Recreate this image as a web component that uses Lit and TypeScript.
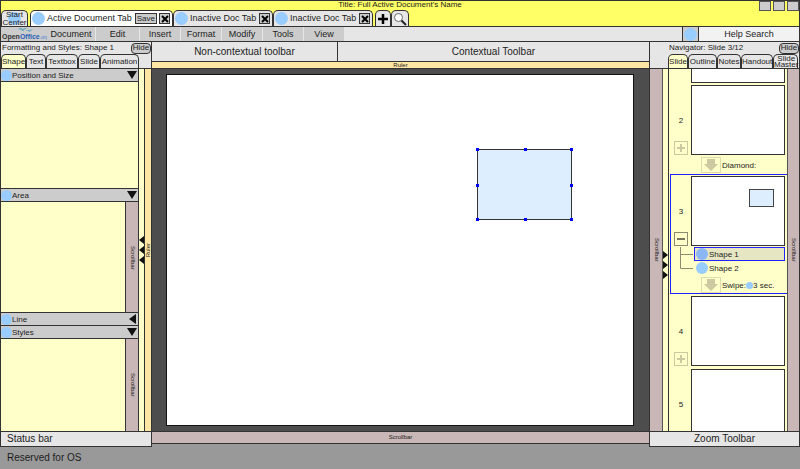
import { LitElement, html, svg, css, nothing } from "lit";
import { customElement } from "lit/decorators.js";
import { classMap } from "lit/directives/class-map.js";

const birds = svg`<path d="M0 3 Q4 0 7 3 Q9 1 13 1 Q9 3 7 6 Q5 3 0 3Z M11 5 Q14 3 16 5 Q18 3 21 3 Q18 5 16 7 Q14 5 11 5Z" fill="#6ab"/>`;
const cross = html`<svg width="8" height="8" viewBox="0 0 8 8" aria-hidden="true"><path d="M1 1L7 7M7 1L1 7" stroke="#000" stroke-width="2"/></svg>`;
const downArrow = html`<svg class="glyph" width="12" height="12" viewBox="0 0 12 12" aria-hidden="true"><path d="M1 2H11L6 10Z" fill="#111"/></svg>`;
const leftArrow = html`<svg class="glyph" width="12" height="12" viewBox="0 0 12 12" aria-hidden="true"><path d="M10 1V11L3 6Z" fill="#111"/></svg>`;

interface Section { name: string; open: boolean; scroll: boolean; size: number; }
interface Slide { no: string; toggle?: "plus" | "minus"; shapes?: string[]; effect?: string; duration?: string; current?: boolean; }

@customElement("app-root")
export class AppRoot extends LitElement {
  static styles = css`
    :host {
      display: flex; flex-direction: column; height: 100vh; min-width: 700px; overflow: hidden;
      box-sizing: border-box; background: #999; color: #1c1c1c;
      font: 9px/11px "Liberation Sans", Arial, sans-serif; --line: #333;
    }
    *, *::before { box-sizing: border-box; }
    button, input { font: inherit; color: inherit; margin: 0; padding: 0; border: 0; background: none; border-radius: 0; }
    ul, ol, h1, h2 { margin: 0; padding: 0; list-style: none; font: inherit; }
    svg { display: block; flex: none; }
    .dot { flex: none; width: 11px; height: 11px; border-radius: 50%; background: #9cf; }

    .top { position: relative; flex: none; height: 27px; background: #ff6; border: 1px solid var(--line); padding-top: 9px; }
    .title { position: absolute; top: 0; left: 0; right: 0; text-align: center; font-size: 8px; line-height: 8px; }
    .window { position: absolute; top: 0; right: 0; display: flex; gap: 2px; }
    .window button { width: 12px; height: 10px; background: #ccc; border: 1px solid #555; }
    .docs { display: flex; height: 16px; }
    .doc { position: relative; display: flex; align-items: center; gap: 2px; width: 100px; padding: 0 2px 0 1px; background: #e6e6e6; border: 1px solid var(--line); border-bottom: 0; border-radius: 5px 5px 0 0; white-space: nowrap; }
    .doc .dot { width: 13px; height: 13px; }
    .doc button.name { flex: 1; text-align: left; }
    .doc.on { width: 143px; margin-left: 2px; background: #fff; }
    .doc.start { width: 27px; padding: 0; justify-content: center; }
    .doc.start .dot { position: absolute; left: 6px; top: 1px; }
    .doc.start button { position: relative; font-size: 8px; line-height: 8px; }
    .doc.tool { width: 16px; padding: 0; justify-content: center; margin-left: 2px; }
    .doc.tool + .tool { width: 18px; margin-left: 0; }
    .save { height: 11px; padding: 0 1px; background: #ccc; border: 1px solid #333; font-size: 8px; line-height: 9px; }
    .close { width: 11px; height: 11px; display: grid; place-items: center; background: #ccc; border: 1px solid #333; }

    .menu { flex: none; display: flex; height: 15px; background: #e6e6e6; border: solid var(--line); border-width: 0 1px 1px; }
    .logo { flex: none; width: 46px; padding-left: 1px; display: flex; flex-direction: column; justify-content: space-between; background: #ccc; color: #333; font-size: 7px; font-weight: bold; line-height: 9px; white-space: nowrap; }
    .logo svg { margin-left: 13px; }
    .logo b { color: #2a5fb8; }
    .logo i { color: #4a80d0; font-size: 5px; font-style: normal; font-weight: normal; }
    .menus { display: flex; gap: 1px; flex: 1; }
    .menus button { width: 40px; background: #ccc; }
    .menus button.wide { width: 48px; }
    .menus button.mid { width: 43px; }
    .helpicon { width: 17px; display: grid; place-items: center; background: #ccc; border: solid var(--line); border-width: 0 1px; }
    .helpicon .dot { width: 13px; height: 13px; }
    .help { width: 100px; background: #f2f2f2; text-align: center; outline: none; }
    .help::placeholder { color: #1c1c1c; opacity: 1; }

    .main { flex: 1; min-height: 0; display: grid; grid-template-columns: 151px minmax(0, 1fr) 151px; }
    .side, .center { display: flex; flex-direction: column; min-height: 0; }
    .side { border: solid var(--line); border-width: 0 0 0 1px; }
    .side.right { border-right-width: 1px; }
    .head { flex: none; height: 27px; display: flex; flex-direction: column; justify-content: space-between; background: #e6e6e6; border-bottom: 1px solid var(--line); }
    .headline { display: flex; justify-content: space-between; align-items: center; height: 12px; padding-left: 1px; font-size: 8px; line-height: 10px; white-space: nowrap; }
    .right .headline { padding-left: 19px; }
    .hide { width: 20px; height: 11px; border: 1px solid var(--line); border-radius: 4px; background: #ccc; line-height: 8px; }
    .tabs { display: flex; height: 14px; font-size: 8px; }
    .tabs button { flex: none; background: #e6e6e6; border: 1px solid var(--line); border-bottom: 0; border-radius: 5px 5px 0 0; line-height: 8px; white-space: nowrap; display: grid; place-items: center; overflow: visible; }
    .tabs button.two { line-height: 6px; white-space: pre; }
    .tabs button.on { background: #ffffca; }
    .right .tabs { margin-left: 18px; }
    .w20 { width: 20px; } .w22 { width: 22px; } .w24 { width: 24px; } .w25 { width: 25px; } .w29 { width: 29px; } .w32 { width: 32px; } .w39 { width: 39px; }

    .body { flex: 1; min-height: 0; display: flex; }
    .sections { flex: 1; min-width: 0; display: flex; flex-direction: column; background: #ffffca; }
    .bar { flex: none; height: 13px; width: 100%; display: flex; align-items: center; background: #ccc; border-bottom: 1px solid var(--line); font-size: 8px; text-align: left; }
    .bar .name { flex: 1; }
    .panel { flex: var(--size) 1 0; min-height: 0; display: flex; justify-content: flex-end; border-bottom: 1px solid var(--line); }
    .panel:last-child { border-bottom: 0; }
    .scroll { flex: none; display: grid; place-items: center; background: #c9b6b6; font-size: 6px; line-height: 7px; overflow: hidden; }
    .vertical { writing-mode: vertical-rl; width: 13px; }
    .panel .vertical { border-left: 1px solid var(--line); }
    .splitter { width: 7px; flex: none; display: flex; flex-direction: column; justify-content: center; gap: 2px; background: #ffffca; border: solid var(--line); border-width: 0 1px; }
    .ruler { flex: none; display: grid; place-items: center; background: #ffe6a3; font-size: 6px; line-height: 6px; }
    .vruler { width: 6px; writing-mode: vertical-rl; }
    .vruler span { transform: rotate(180deg); }
    .foot { flex: none; height: 16px; padding: 0 6px; background: #e6e6e6; border: solid var(--line); border-width: 1px 0; font-size: 10px; line-height: 14px; }
    .right .foot { text-align: center; }

    .center { border-left: 1px solid var(--line); }
    .toolbars { flex: none; height: 20px; display: flex; background: #e6e6e6; border-bottom: 1px solid var(--line); font-size: 10px; }
    .toolbars div { display: grid; place-items: center; flex: 313; }
    .toolbars div:first-child { flex: 186; border-right: 1px solid var(--line); }
    .hruler { height: 7px; border-bottom: 1px solid var(--line); }
    .canvas { flex: 1; min-height: 0; display: flex; background: #4d4d4d; padding: 5px 15px 5px 14px; }
    .page { flex: 1; position: relative; background: #fff; border: 1px solid #111; }
    .shape { position: absolute; left: 310px; top: 74px; width: 95px; height: 71px; background: #def; border: 1px solid #333; }
    .handle { position: absolute; width: 3px; height: 3px; background: #00f; }
    .l { left: -2px; } .c { left: calc(50% - 1px); } .r { right: -2px; }
    .t { top: -2px; } .m { top: calc(50% - 1px); } .b { bottom: -2px; }
    .hscroll { height: 13px; border: solid var(--line); border-width: 1px 0; margin-bottom: 3px; }

    .right .body > .vertical { border-right: 1px solid #555; }
    .right .body > .vertical.end { width: 12px; border: 0; border-left: 1px solid #555; }
    .right .splitter { width: 6px; border-left: 0; padding-top: 30px; }
    .slides { flex: 1; min-width: 0; overflow: hidden; background: #ffffca; padding-left: 1px; display: flex; flex-direction: column; }
    .slide { flex: none; display: grid; grid-template-columns: 20px minmax(0, 1fr); align-content: start; padding: 1px 2px 0 0; border: 1px solid transparent; border-right: 0; font-size: 8px; }
    .slide.current { border-color: #22f; }
    .slide.first { padding-top: 0; border-width: 0 0 0 1px; }
    .thumb { position: relative; height: 70px; background: #fff; border: 1px solid var(--line); }
    .first .thumb { height: 14px; border-top: 0; }
    .mini { position: absolute; right: 10px; top: 12px; width: 25px; height: 18px; background: #def; border: 1px solid #444; }
    .number { display: flex; flex-direction: column; justify-content: flex-end; align-items: center; gap: 15px; height: 70px; }
    .number.bare { justify-content: center; }
    .toggle { width: 14px; height: 14px; display: grid; place-items: center; border: 1px solid #ccc9a0; }
    .toggle.minus { border-color: #8b8b70; }
    .shapes { grid-column: 1 / 3; display: grid; grid-template-columns: 23px minmax(0, 1fr); padding-top: 1px; }
    .shapes button { display: flex; align-items: center; gap: 1px; width: 100%; height: 14px; padding-left: 1px; text-align: left; border: 1px solid transparent; }
    .shapes button .dot { width: 12px; height: 12px; }
    .shapes button.on { background: #e6e6c3; border-color: #22f; }
    .shapes button.on .dot { background: #8cb6f2; }
    .effect { grid-column: 1 / 3; display: flex; align-items: center; height: 18px; padding: 2px 0 0 30px; }
    .effect .box { width: 20px; height: 16px; display: grid; place-items: center; border: 1px solid #deddb0; margin-right: 1px; }
    .effect .dot { width: 7px; height: 7px; }
    .os { flex: none; height: 22px; padding: 0 7px; font-size: 10px; line-height: 22px; }
  `;

  private sections: Section[] = [
    { name: "Position and Size", open: true, scroll: false, size: 108 },
    { name: "Area", open: true, scroll: true, size: 112 },
    { name: "Line", open: false, scroll: false, size: 0 },
    { name: "Styles", open: true, scroll: true, size: 93 },
  ];

  private slides: Slide[] = [
    { no: "2", toggle: "plus", effect: "Diamond:" },
    { no: "3", toggle: "minus", shapes: ["Shape 1", "Shape 2"], effect: "Swipe:", duration: "3 sec.", current: true },
    { no: "4", toggle: "plus" },
    { no: "5" },
  ];

  private doc(name: string, on = false) {
    return html`<div class=${classMap({ doc: true, on })}>
      <span class="dot"></span><button class="name">${name}</button>
      ${on ? html`<button class="save">Save</button>` : nothing}
      <button class="close" aria-label="Close ${name}">${cross}</button>
    </div>`;
  }

  private tabs(list: [string, string][]) {
    return html`<div class="tabs" role="tablist">${list.map(([n, w], i) => html`<button role="tab" aria-selected=${i === 0} class=${classMap({ [w]: true, on: i === 0, two: n.includes("\n") })}>${n}</button>`)}</div>`;
  }

  private splitter(dir: "left" | "right") {
    const d = dir === "left" ? "M5 0V8L0 4Z" : "M0 0V8L5 4Z";
    return html`<div class="splitter">${[0, 1, 2].map(() => html`<svg width="5" height="8" viewBox="0 0 5 8" aria-hidden="true"><path d=${d} fill="#111"/></svg>`)}</div>`;
  }

  private slide(s: Slide) {
    const plus = s.toggle === "plus";
    return html`<li class=${classMap({ slide: true, current: !!s.current })}>
      <div class=${classMap({ number: true, bare: !s.toggle })}>
        <span>${s.no}</span>
        ${s.toggle ? html`<button class=${classMap({ toggle: true, minus: !plus })} aria-label=${plus ? "Expand" : "Collapse"}>
          <svg width="10" height="10" viewBox="0 0 10 10"><path d=${plus ? "M5 1V9M1 5H9" : "M1 5H9"} stroke=${plus ? "#ccc9a0" : "#77775f"} stroke-width="2"/></svg>
        </button>` : nothing}
      </div>
      <div class="thumb">${s.current ? html`<div class="mini"></div>` : nothing}</div>
      ${s.shapes ? html`<div class="shapes">
        <svg width="23" height="28" viewBox="0 0 23 28" aria-hidden="true"><path d="M9.500 0V21.500H22M9.500 7.500H22" fill="none" stroke="#8b8b70"/></svg>
        <div>${s.shapes.map((n, i) => html`<button class=${i === 0 ? "on" : ""}><span class="dot"></span>${n}</button>`)}</div>
      </div>` : nothing}
      ${s.effect ? html`<div class="effect">
        <span class="box"><svg width="16" height="14" viewBox="0 0 16 14" aria-hidden="true"><path d="M4 1H12V6H15L8 13L1 6H4Z" fill="#ccc9a0"/></svg></span>
        <span>${s.effect}</span>${s.duration ? html`<span class="dot"></span><span>${s.duration}</span>` : nothing}
      </div>` : nothing}
    </li>`;
  }

  render() {
    return html`
      <header class="top">
        <h1 class="title">Title: Full Active Document's Name</h1>
        <div class="window"><button aria-label="Minimize"></button><button aria-label="Maximize"></button><button aria-label="Close"></button></div>
        <nav class="docs">
          <div class="doc start"><span class="dot"></span><button>Start<br>Center</button></div>
          ${this.doc("Active Document Tab", true)}${this.doc("Inactive Doc Tab")}${this.doc("Inactive Doc Tab")}
          <button class="doc tool" aria-label="New tab"><svg width="10" height="10" viewBox="0 0 10 10"><path d="M5 0V10M0 5H10" stroke="#000" stroke-width="2.500"/></svg></button>
          <button class="doc tool" aria-label="Search"><svg width="14" height="14" viewBox="0 0 14 14"><circle cx="5.500" cy="5.500" r="4" fill="#fff" stroke="#666"/><path d="M8.500 8.500L13 13" stroke="#222" stroke-width="2"/></svg></button>
        </nav>
      </header>
      <div class="menu">
        <div class="logo"><svg width="21" height="5" viewBox="0 0 21 7">${birds}</svg><span>Open<b>Office</b><i>.org</i></span></div>
        <nav class="menus">
          <button class="wide">Document</button><button class="mid">Edit</button><button>Insert</button><button>Format</button><button>Modify</button><button>Tools</button><button>View</button>
        </nav>
        <div class="helpicon"><span class="dot"></span></div>
        <input class="help" aria-label="Help Search" placeholder="Help Search">
      </div>
      <main class="main">
        <section class="side">
          <div class="head">
            <div class="headline"><h2>Formatting and Styles: Shape 1</h2><button class="hide">Hide</button></div>
            ${this.tabs([["Shape", "w25"], ["Text", "w20"], ["Textbox", "w32"], ["Slide", "w22"], ["Animation", "w39"]])}
          </div>
          <div class="body">
            <div class="sections">${this.sections.map((s) => html`
              <button class="bar" aria-expanded=${s.open}><span class="dot"></span><span class="name">${s.name}</span>${s.open ? downArrow : leftArrow}</button>
              ${s.open ? html`<div class="panel" style="--size:${s.size}">${s.scroll ? html`<div class="scroll vertical">Scrollbar</div>` : nothing}</div>` : nothing}`)}
            </div>
            ${this.splitter("left")}
            <div class="ruler vruler"><span>Ruler</span></div>
          </div>
          <div class="foot">Status bar</div>
        </section>
        <section class="center">
          <div class="toolbars"><div>Non-contextual toolbar</div><div>Contextual Toolbar</div></div>
          <div class="ruler hruler">Ruler</div>
          <div class="canvas"><div class="page"><div class="shape">
            ${["l t", "c t", "r t", "l m", "r m", "l b", "c b", "r b"].map((p) => html`<span class="handle ${p}"></span>`)}
          </div></div></div>
          <div class="scroll hscroll">Scrollbar</div>
        </section>
        <section class="side right">
          <div class="head">
            <div class="headline"><h2>Navigator: Slide 3/12</h2><button class="hide">Hide</button></div>
            ${this.tabs([["Slide", "w20"], ["Outline", "w29"], ["Notes", "w24"], ["Handout", "w32"], ["Slide\nMaster", "w25"]])}
          </div>
          <div class="body">
            <div class="scroll vertical">Scrollbar</div>
            ${this.splitter("right")}
            <ol class="slides">
              <li class="slide first"><span></span><div class="thumb"></div></li>
              ${this.slides.map((s) => this.slide(s))}
            </ol>
            <div class="scroll vertical end">Scrollbar</div>
          </div>
          <div class="foot">Zoom Toolbar</div>
        </section>
      </main>
      <footer class="os">Reserved for OS</footer>
    `;
  }
}
